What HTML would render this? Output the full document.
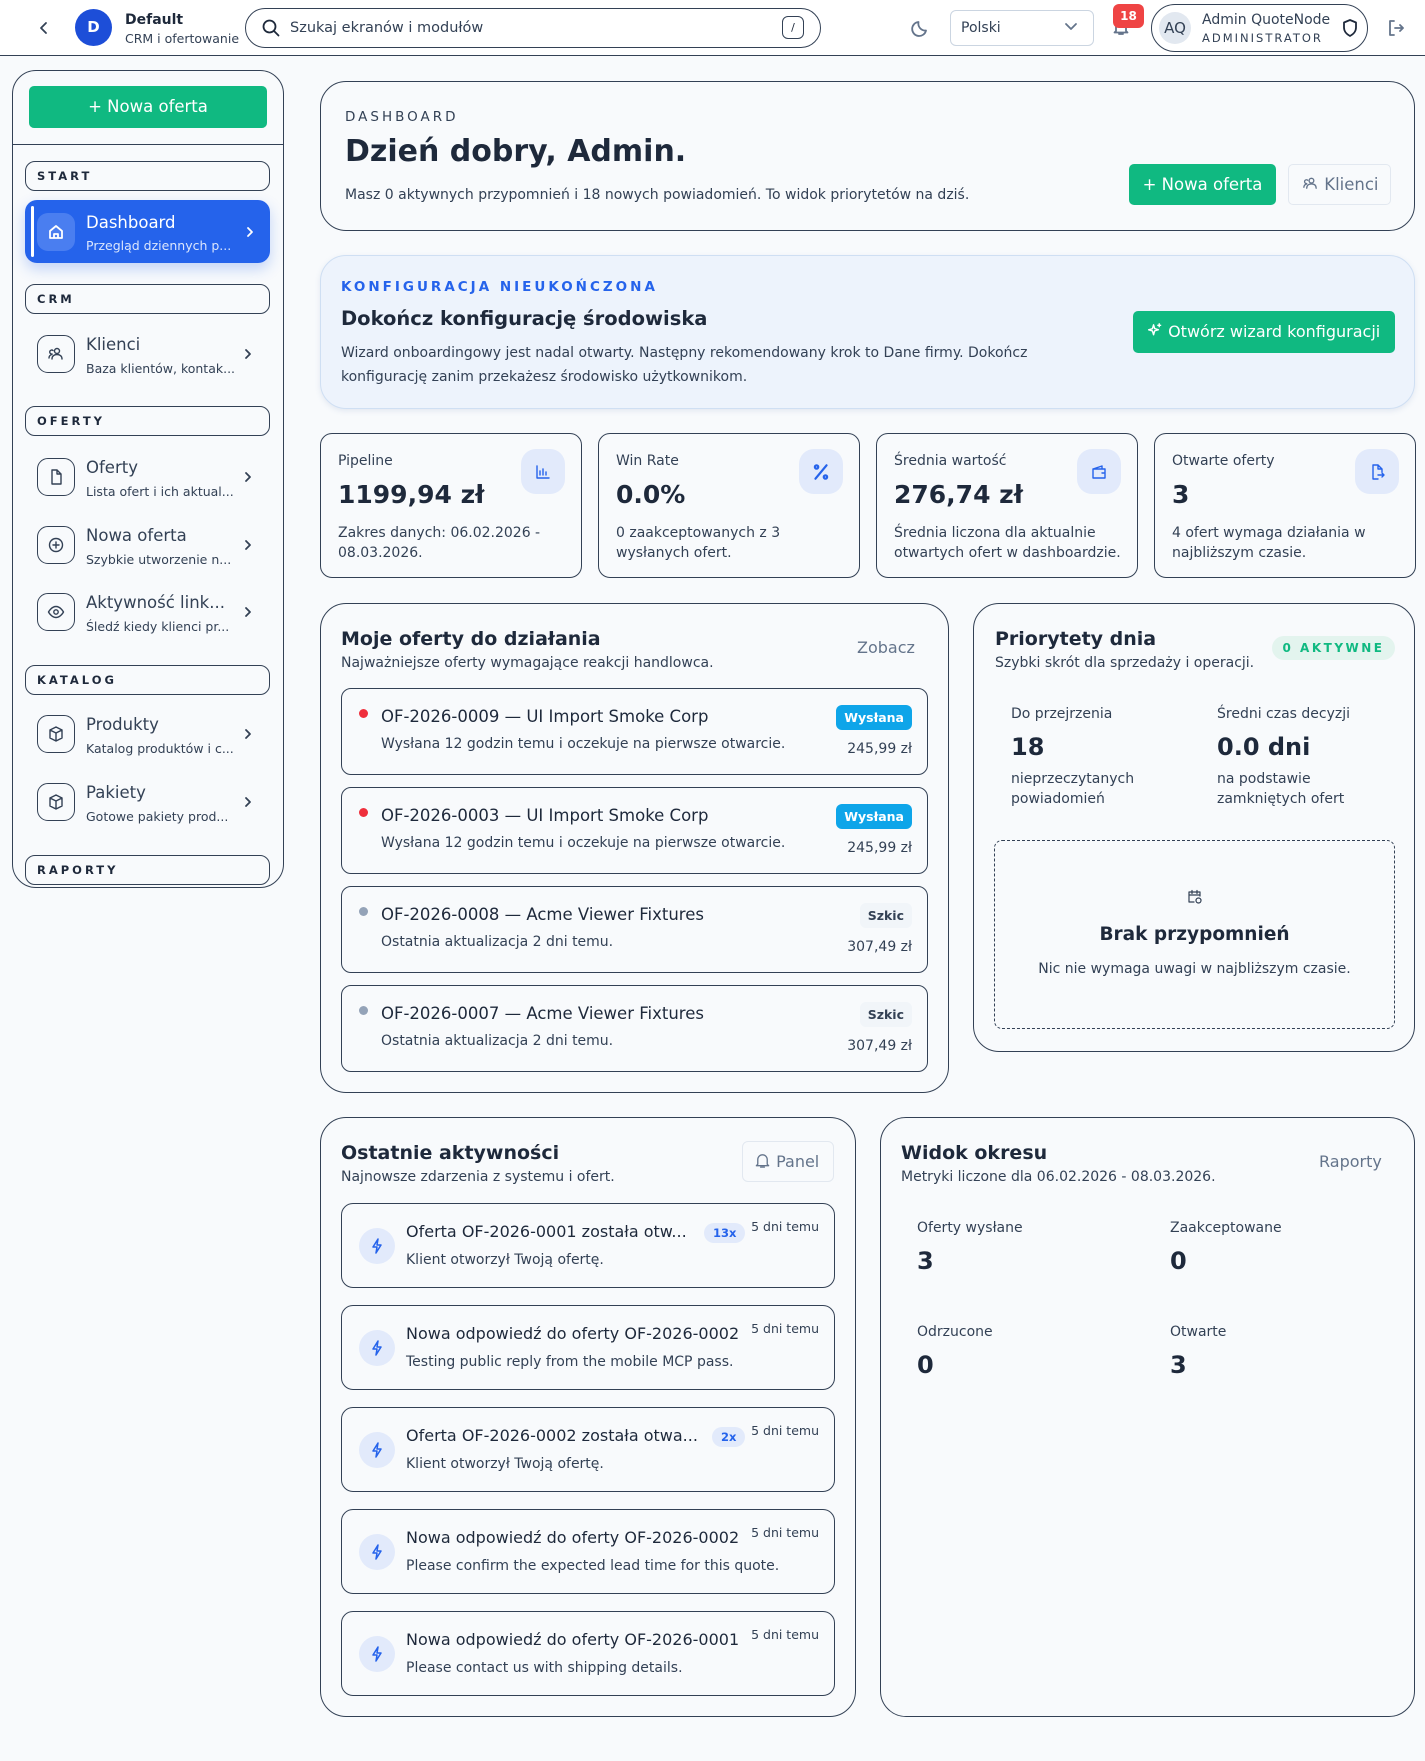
<!DOCTYPE html>
<html><head><meta charset="utf-8">
<style>
*{box-sizing:border-box;margin:0;padding:0}
body{width:1425px;height:1761px;background:#f8fafc;font-family:"DejaVu Sans","Liberation Sans",sans-serif;color:#1e293b;position:relative;overflow:hidden}
.a{position:absolute}
.card{position:absolute;border:1.3px solid #334155;border-radius:26px;background:#f8fafc}
.ico{stroke:currentColor;fill:none;stroke-width:1.8;stroke-linecap:round;stroke-linejoin:round}
.lbl{position:absolute;left:25px;width:245px;height:30px;border:1.3px solid #334155;border-radius:10px;font-size:11.5px;font-weight:bold;letter-spacing:3px;padding:7px 0 0 11px;color:#1e293b}
.item{position:absolute;left:25px;width:245px;height:62px}
.item .ib{position:absolute;left:12px;top:12px;width:38px;height:38px;border:1.3px solid #334155;border-radius:11px;display:flex;align-items:center;justify-content:center;color:#334155}
.item .t{position:absolute;left:61px;top:12px;font-size:16.5px;color:#334155;white-space:nowrap}
.item .s{position:absolute;left:61px;top:38px;font-size:12.5px;color:#334155;white-space:nowrap}
.item .c{position:absolute;left:218px;top:24px;color:#334155}
.stat{position:absolute;top:433px;width:262px;height:145px;border:1.3px solid #334155;border-radius:12px}
.stat .l{position:absolute;left:17px;top:19px;font-size:14px;color:#334155}
.stat .v{position:absolute;left:17px;top:46px;font-size:25px;font-weight:bold;color:#1e293b}
.stat .d{position:absolute;left:17px;top:89px;font-size:14px;line-height:20px;color:#334155;width:230px}
.stat .ic{position:absolute;right:16px;top:15px;width:44px;height:45px;border-radius:15px;background:#e2eafb;display:flex;align-items:center;justify-content:center;color:#2563eb}
.off{position:absolute;left:341px;width:587px;height:87px;border:1.3px solid #334155;border-radius:10px}
.off .dot{position:absolute;left:17px;top:20px;width:9px;height:9px;border-radius:50%}
.off .t{position:absolute;left:39px;top:18px;font-size:16.5px;color:#1e293b}
.off .s{position:absolute;left:39px;top:47px;font-size:14px;color:#334155}
.off .b{position:absolute;right:15px;top:16px;height:25px;padding:0 8px;border-radius:6px;font-size:12.5px;font-weight:bold;line-height:25px}
.off .p{position:absolute;right:15px;top:52px;font-size:14px;color:#334155}
.act{position:absolute;left:341px;width:494px;height:85px;border:1.3px solid #334155;border-radius:12px}
.act .ci{position:absolute;left:17px;top:24px;width:36px;height:36px;border-radius:50%;background:#e2eafb;display:flex;align-items:center;justify-content:center;color:#2563eb}
.act .t{position:absolute;left:64px;top:18px;font-size:16px;color:#1e293b;white-space:nowrap}
.act .s{position:absolute;left:64px;top:48px;font-size:14px;color:#334155;white-space:nowrap}
.act .tm{position:absolute;right:15px;top:15px;font-size:12.5px;color:#334155}
.act .n{position:absolute;top:19px;height:20px;padding:0 9px;border-radius:10px;background:#e2eafb;color:#2563eb;font-size:11.5px;font-weight:bold;line-height:20px}
.h2{position:absolute;font-size:19px;font-weight:bold;color:#1e293b}
.sub{position:absolute;font-size:14px;color:#334155}
.m .l{position:absolute;font-size:14px;color:#334155}
.m .v{position:absolute;font-size:24px;font-weight:bold;color:#1e293b}
</style></head><body>

<!-- HEADER -->
<div class="a" style="left:0;top:0;width:1425px;height:56px;background:#fff;border-bottom:1.3px solid #334155"></div>
<svg class="a ico" style="left:37px;top:20px;color:#334155" width="14" height="16" viewBox="0 0 14 16"><path d="M9 3L4 8l5 5"/></svg>
<div class="a" style="left:75px;top:9px;width:37px;height:37px;border-radius:50%;background:#1d4ed8;color:#fff;font-weight:bold;font-size:15px;text-align:center;line-height:37px">D</div>
<div class="a" style="left:125px;top:12px;font-size:14px;font-weight:bold">Default</div>
<div class="a" style="left:125px;top:31px;font-size:12.5px;color:#334155">CRM i ofertowanie</div>
<div class="a" style="left:245px;top:8px;width:576px;height:40px;border:1.3px solid #334155;border-radius:20px"></div>
<svg class="a ico" style="left:261px;top:18px;color:#1e293b" width="20" height="20" viewBox="0 0 20 20"><circle cx="8.5" cy="8.5" r="6"/><path d="M13 13l4.5 4.5"/></svg>
<div class="a" style="left:290px;top:20px;font-size:14.5px;color:#334155">Szukaj ekranów i modułów</div>
<div class="a" style="left:782px;top:16px;width:22px;height:23px;border:1.3px solid #334155;border-radius:6px;font-size:11px;text-align:center;line-height:21px">/</div>
<svg class="a ico" style="left:911px;top:18px;color:#64748b" width="20" height="20" viewBox="0 0 20 20"><path d="M15 12.5A7 7 0 0 1 7.5 4a7 7 0 1 0 7.5 8.5z"/></svg>
<div class="a" style="left:950px;top:10px;width:144px;height:36px;border:1px solid #cbd5e1;border-radius:6px;background:#fff"></div>
<div class="a" style="left:961px;top:20px;font-size:14px;color:#334155">Polski</div>
<svg class="a ico" style="left:1064px;top:22px;color:#64748b" width="14" height="10" viewBox="0 0 14 10"><path d="M2 2l5 5 5-5"/></svg>
<svg class="a ico" style="left:1112px;top:18px;color:#64748b" width="18" height="18" viewBox="0 0 18 18"><path d="M4 13V8a5 5 0 0 1 10 0v5l1.5 1.5h-13zM7 16h4"/></svg>
<div class="a" style="left:1113px;top:4px;width:31px;height:24px;border-radius:6px;background:#ef4444;color:#fff;font-size:12px;font-weight:bold;text-align:center;line-height:24px">18</div>
<div class="a" style="left:1151px;top:4px;width:217px;height:48px;border:1.3px solid #334155;border-radius:24px"></div>
<div class="a" style="left:1159px;top:12px;width:32px;height:32px;border-radius:50%;background:#e2e8f0;font-size:15px;text-align:center;line-height:32px;color:#334155">AQ</div>
<div class="a" style="left:1202px;top:12px;font-size:14px;color:#334155">Admin QuoteNode</div>
<div class="a" style="left:1202px;top:31px;font-size:11.5px;letter-spacing:2px;color:#334155">ADMINISTRATOR</div>
<svg class="a ico" style="left:1341px;top:18px;color:#1e293b" width="18" height="20" viewBox="0 0 18 20"><path d="M9 2l6 2.5v5c0 4-3 7-6 8.5-3-1.5-6-4.5-6-8.5v-5z"/></svg>
<svg class="a ico" style="left:1386px;top:18px;color:#64748b" width="20" height="20" viewBox="0 0 20 20"><path d="M8 3H4v14h4M9 10h8M14 7l3 3-3 3"/></svg>

<!-- SIDEBAR -->
<div class="card" style="left:12px;top:70px;width:272px;height:818px;border-radius:24px"></div>
<div class="a" style="left:29px;top:86px;width:238px;height:42px;border-radius:5px;background:#10b981;color:#fff;font-size:16.5px;text-align:center;line-height:42px">+ Nowa oferta</div>
<div class="a" style="left:12px;top:144px;width:272px;border-top:1.3px solid #334155"></div>
<div class="lbl" style="top:161px">START</div>
<div class="a" style="left:25px;top:200px;width:245px;height:63px;border-radius:12px;background:#2563eb;box-shadow:0 6px 14px rgba(37,99,235,.25)"></div>
<div class="a" style="left:31px;top:206px;width:3px;height:51px;background:#fff;border-radius:2px"></div>
<div class="a" style="left:37px;top:213px;width:38px;height:38px;border-radius:11px;background:#4a7ef0;display:flex;align-items:center;justify-content:center;color:#fff"><svg class="ico" width="18" height="18" viewBox="0 0 18 18"><path d="M3 8l6-5 6 5v7H3zM7 15v-4h4v4"/></svg></div>
<div class="a" style="left:86px;top:213px;font-size:16.5px;color:#fff">Dashboard</div>
<div class="a" style="left:86px;top:238px;font-size:12.5px;color:#dbe6fd">Przegląd dziennych p...</div>
<svg class="a ico" style="left:245px;top:225px;color:#fff" width="10" height="14" viewBox="0 0 10 14"><path d="M3 3l4 4-4 4"/></svg>

<div class="lbl" style="top:284px">CRM</div>
<div class="item" style="top:323px"><div class="ib"><svg class="ico" width="18" height="18" viewBox="0 0 18 18" style="stroke-width:1.4"><circle cx="10" cy="6" r="2.5"/><path d="M5 14c0-3 2-4.5 5-4.5s5 1.5 5 4.5M6 5.5a2 2 0 1 0-1 3.5M2 13c0-2 1-3 3-3.5"/></svg></div><div class="t">Klienci</div><div class="s">Baza klientów, kontak...</div><svg class="c ico" width="10" height="14" viewBox="0 0 10 14"><path d="M3 3l4 4-4 4"/></svg></div>
<div class="lbl" style="top:406px">OFERTY</div>
<div class="item" style="top:446px"><div class="ib"><svg class="ico" width="18" height="18" viewBox="0 0 18 18" style="stroke-width:1.4"><path d="M5 2h5l4 4v10H5zM10 2v4h4"/></svg></div><div class="t">Oferty</div><div class="s">Lista ofert i ich aktual...</div><svg class="c ico" width="10" height="14" viewBox="0 0 10 14"><path d="M3 3l4 4-4 4"/></svg></div>
<div class="item" style="top:514px"><div class="ib"><svg class="ico" width="18" height="18" viewBox="0 0 18 18" style="stroke-width:1.4"><circle cx="9" cy="9" r="6.5"/><path d="M9 6v6M6 9h6"/></svg></div><div class="t">Nowa oferta</div><div class="s">Szybkie utworzenie n...</div><svg class="c ico" width="10" height="14" viewBox="0 0 10 14"><path d="M3 3l4 4-4 4"/></svg></div>
<div class="item" style="top:581px"><div class="ib"><svg class="ico" width="18" height="18" viewBox="0 0 18 18" style="stroke-width:1.4"><path d="M1.5 9s3-5.5 7.5-5.5S16.5 9 16.5 9s-3 5.5-7.5 5.5S1.5 9 1.5 9z"/><circle cx="9" cy="9" r="2.2"/></svg></div><div class="t">Aktywność link...</div><div class="s">Śledź kiedy klienci pr...</div><svg class="c ico" width="10" height="14" viewBox="0 0 10 14"><path d="M3 3l4 4-4 4"/></svg></div>
<div class="lbl" style="top:665px">KATALOG</div>
<div class="item" style="top:703px"><div class="ib"><svg class="ico" width="18" height="18" viewBox="0 0 18 18" style="stroke-width:1.4"><path d="M9 2l6 3v8l-6 3-6-3V5zM3 5l6 3 6-3M9 8v8"/></svg></div><div class="t">Produkty</div><div class="s">Katalog produktów i c...</div><svg class="c ico" width="10" height="14" viewBox="0 0 10 14"><path d="M3 3l4 4-4 4"/></svg></div>
<div class="item" style="top:771px"><div class="ib"><svg class="ico" width="18" height="18" viewBox="0 0 18 18" style="stroke-width:1.4"><path d="M9 2l6 3v8l-6 3-6-3V5zM3 5l6 3 6-3M9 8v8"/></svg></div><div class="t">Pakiety</div><div class="s">Gotowe pakiety prod...</div><svg class="c ico" width="10" height="14" viewBox="0 0 10 14"><path d="M3 3l4 4-4 4"/></svg></div>
<div class="lbl" style="top:855px">RAPORTY</div>

<!-- HERO -->
<div class="card" style="left:320px;top:81px;width:1095px;height:150px"></div>
<div class="a" style="left:345px;top:109px;font-size:13.5px;letter-spacing:3px;color:#334155">DASHBOARD</div>
<div class="a" style="left:345px;top:134px;font-size:30px;font-weight:bold;color:#1e293b">Dzień dobry, Admin.</div>
<div class="a" style="left:345px;top:187px;font-size:14px;color:#334155">Masz 0 aktywnych przypomnień i 18 nowych powiadomień. To widok priorytetów na dziś.</div>
<div class="a" style="left:1129px;top:164px;width:147px;height:41px;border-radius:5px;background:#10b981;color:#fff;font-size:16.5px;text-align:center;line-height:41px">+ Nowa oferta</div>
<div class="a" style="left:1288px;top:164px;width:103px;height:41px;border-radius:5px;border:1px solid #e2e8f0;color:#64748b;font-size:16.5px;line-height:39px;padding-left:13px"><svg class="ico" width="17" height="17" viewBox="0 0 18 18" style="stroke-width:1.4;vertical-align:-2px"><circle cx="10" cy="6" r="2.5"/><path d="M5 14c0-3 2-4.5 5-4.5s5 1.5 5 4.5M6 5.5a2 2 0 1 0-1 3.5M2 13c0-2 1-3 3-3.5"/></svg> Klienci</div>

<!-- CONFIG -->
<div class="a" style="left:320px;top:255px;width:1095px;height:154px;border-radius:26px;background:#edf3fc;border:1px solid #cfdff3;box-shadow:0 2px 6px rgba(100,130,180,.15)"></div>
<div class="a" style="left:341px;top:279px;font-size:13.5px;font-weight:bold;letter-spacing:3px;color:#2563eb">KONFIGURACJA NIEUKOŃCZONA</div>
<div class="a" style="left:341px;top:307px;font-size:19.5px;font-weight:bold;color:#1e293b">Dokończ konfigurację środowiska</div>
<div class="a" style="left:341px;top:341px;width:720px;font-size:14px;line-height:24px;color:#334155">Wizard onboardingowy jest nadal otwarty. Następny rekomendowany krok to Dane firmy. Dokończ konfigurację zanim przekażesz środowisko użytkownikom.</div>
<div class="a" style="left:1133px;top:311px;width:262px;height:42px;border-radius:5px;background:#10b981;color:#fff;font-size:16px;line-height:42px;padding-left:13px"><svg class="ico" width="17" height="17" viewBox="0 0 18 18" style="stroke-width:1.5;vertical-align:-2px"><path d="M8 3l1.2 4 4 1.2-4 1.2L8 13.5l-1.2-4-4-1.2 4-1.2zM14 2v3M12.5 3.5h3"/></svg> Otwórz wizard konfiguracji</div>

<!-- STATS -->
<div class="stat" style="left:320px"><div class="l">Pipeline</div><div class="v">1199,94 zł</div><div class="d">Zakres danych: 06.02.2026 - 08.03.2026.</div><div class="ic"><svg class="ico" width="18" height="18" viewBox="0 0 18 18" style="stroke-width:1.4"><path d="M3 3v12h12M6 12V8M9 12V6M12 12V9"/></svg></div></div>
<div class="stat" style="left:598px"><div class="l">Win Rate</div><div class="v">0.0%</div><div class="d">0 zaakceptowanych z 3 wysłanych ofert.</div><div class="ic"><svg class="ico" width="20" height="20" viewBox="0 0 18 18" style="stroke-width:2"><path d="M14 3L4 15"/><circle cx="5" cy="4.5" r="1.5"/><circle cx="13" cy="13.5" r="1.5"/></svg></div></div>
<div class="stat" style="left:876px"><div class="l">Średnia wartość</div><div class="v">276,74 zł</div><div class="d">Średnia liczona dla aktualnie otwartych ofert w dashboardzie.</div><div class="ic"><svg class="ico" width="18" height="18" viewBox="0 0 18 18" style="stroke-width:1.4"><path d="M3 6h12v9H3zM3 6l9-3v3M12 10h2"/></svg></div></div>
<div class="stat" style="left:1154px"><div class="l">Otwarte oferty</div><div class="v">3</div><div class="d">4 ofert wymaga działania w najbliższym czasie.</div><div class="ic"><svg class="ico" width="18" height="18" viewBox="0 0 18 18" style="stroke-width:1.4"><path d="M5 2h5l4 4v3M10 2v4h4M5 2v14h5M10 12h6M14 10l2 2-2 2"/></svg></div></div>

<!-- MOJE OFERTY -->
<div class="card" style="left:320px;top:603px;width:629px;height:490px"></div>
<div class="h2" style="left:341px;top:628px">Moje oferty do działania</div>
<div class="sub" style="left:341px;top:655px">Najważniejsze oferty wymagające reakcji handlowca.</div>
<div class="a" style="left:857px;top:638px;font-size:16px;color:#64748b">Zobacz</div>
<div class="off" style="top:688px"><div class="dot" style="background:#ef2f3c"></div><div class="t">OF-2026-0009 — UI Import Smoke Corp</div><div class="s">Wysłana 12 godzin temu i oczekuje na pierwsze otwarcie.</div><div class="b" style="background:#0ea5e9;color:#fff">Wysłana</div><div class="p">245,99 zł</div></div>
<div class="off" style="top:787px"><div class="dot" style="background:#ef2f3c"></div><div class="t">OF-2026-0003 — UI Import Smoke Corp</div><div class="s">Wysłana 12 godzin temu i oczekuje na pierwsze otwarcie.</div><div class="b" style="background:#0ea5e9;color:#fff">Wysłana</div><div class="p">245,99 zł</div></div>
<div class="off" style="top:886px"><div class="dot" style="background:#94a3b8"></div><div class="t">OF-2026-0008 — Acme Viewer Fixtures</div><div class="s">Ostatnia aktualizacja 2 dni temu.</div><div class="b" style="background:#f1f5f9;color:#334155">Szkic</div><div class="p">307,49 zł</div></div>
<div class="off" style="top:985px"><div class="dot" style="background:#94a3b8"></div><div class="t">OF-2026-0007 — Acme Viewer Fixtures</div><div class="s">Ostatnia aktualizacja 2 dni temu.</div><div class="b" style="background:#f1f5f9;color:#334155">Szkic</div><div class="p">307,49 zł</div></div>

<!-- PRIORYTETY -->
<div class="card" style="left:973px;top:603px;width:442px;height:449px"></div>
<div class="h2" style="left:995px;top:628px">Priorytety dnia</div>
<div class="sub" style="left:995px;top:655px">Szybki skrót dla sprzedaży i operacji.</div>
<div class="a" style="left:1272px;top:636px;width:123px;height:24px;border-radius:12px;background:#e3f4ee;color:#10b981;font-size:12px;font-weight:bold;letter-spacing:2.5px;text-align:center;line-height:24px">0 AKTYWNE</div>
<div class="m">
<div class="l" style="left:1011px;top:706px">Do przejrzenia</div><div class="v" style="left:1011px;top:733px">18</div>
<div class="l" style="left:1011px;top:769px;line-height:20px">nieprzeczytanych<br>powiadomień</div>
<div class="l" style="left:1217px;top:706px">Średni czas decyzji</div><div class="v" style="left:1217px;top:733px">0.0 dni</div>
<div class="l" style="left:1217px;top:769px;line-height:20px">na podstawie<br>zamkniętych ofert</div>
</div>
<div class="a" style="left:994px;top:840px;width:401px;height:189px;border:1.3px dashed #334155;border-radius:8px"></div>
<svg class="a ico" style="left:1187px;top:889px;color:#334155;stroke-width:1.2" width="16" height="16" viewBox="0 0 16 16"><path d="M7 13H2V3h11v4M2 6h11M5 1.5v3M10 1.5v3"/><circle cx="11.5" cy="11.5" r="2.5"/></svg>
<div class="a" style="left:994px;top:924px;width:401px;text-align:center;font-size:18.5px;font-weight:bold">Brak przypomnień</div>
<div class="a" style="left:994px;top:961px;width:401px;text-align:center;font-size:14px;color:#334155">Nic nie wymaga uwagi w najbliższym czasie.</div>

<!-- OSTATNIE -->
<div class="card" style="left:320px;top:1117px;width:536px;height:600px"></div>
<div class="h2" style="left:341px;top:1142px">Ostatnie aktywności</div>
<div class="sub" style="left:341px;top:1169px">Najnowsze zdarzenia z systemu i ofert.</div>
<div class="a" style="left:742px;top:1141px;width:92px;height:41px;border:1px solid #e2e8f0;border-radius:6px;color:#64748b;font-size:16px;line-height:39px;padding-left:11px"><svg class="ico" width="17" height="17" viewBox="0 0 18 18" style="stroke-width:1.4;vertical-align:-2px"><path d="M4 13V8a5 5 0 0 1 10 0v5l1.5 1.5h-13zM7 16h4"/></svg> Panel</div>

<div class="act" style="top:1203px"><div class="ci"><svg class="ico" width="14" height="18" viewBox="0 0 14 18" style="stroke-width:1.5"><path d="M8 2L3 10h4l-1 6 5-8H7z"/></svg></div><div class="t">Oferta OF-2026-0001 została otw...</div><div class="n" style="left:362px">13x</div><div class="tm">5 dni temu</div><div class="s">Klient otworzył Twoją ofertę.</div></div>
<div class="act" style="top:1305px"><div class="ci"><svg class="ico" width="14" height="18" viewBox="0 0 14 18" style="stroke-width:1.5"><path d="M8 2L3 10h4l-1 6 5-8H7z"/></svg></div><div class="t">Nowa odpowiedź do oferty OF-2026-0002</div><div class="tm">5 dni temu</div><div class="s">Testing public reply from the mobile MCP pass.</div></div>
<div class="act" style="top:1407px"><div class="ci"><svg class="ico" width="14" height="18" viewBox="0 0 14 18" style="stroke-width:1.5"><path d="M8 2L3 10h4l-1 6 5-8H7z"/></svg></div><div class="t">Oferta OF-2026-0002 została otwa...</div><div class="n" style="left:370px">2x</div><div class="tm">5 dni temu</div><div class="s">Klient otworzył Twoją ofertę.</div></div>
<div class="act" style="top:1509px"><div class="ci"><svg class="ico" width="14" height="18" viewBox="0 0 14 18" style="stroke-width:1.5"><path d="M8 2L3 10h4l-1 6 5-8H7z"/></svg></div><div class="t">Nowa odpowiedź do oferty OF-2026-0002</div><div class="tm">5 dni temu</div><div class="s">Please confirm the expected lead time for this quote.</div></div>
<div class="act" style="top:1611px"><div class="ci"><svg class="ico" width="14" height="18" viewBox="0 0 14 18" style="stroke-width:1.5"><path d="M8 2L3 10h4l-1 6 5-8H7z"/></svg></div><div class="t">Nowa odpowiedź do oferty OF-2026-0001</div><div class="tm">5 dni temu</div><div class="s">Please contact us with shipping details.</div></div>

<!-- WIDOK -->
<div class="card" style="left:880px;top:1117px;width:535px;height:600px"></div>
<div class="h2" style="left:901px;top:1142px">Widok okresu</div>
<div class="sub" style="left:901px;top:1169px">Metryki liczone dla 06.02.2026 - 08.03.2026.</div>
<div class="a" style="left:1319px;top:1152px;font-size:16px;color:#64748b">Raporty</div>
<div class="m">
<div class="l" style="left:917px;top:1220px">Oferty wysłane</div><div class="v" style="left:917px;top:1247px">3</div>
<div class="l" style="left:1170px;top:1220px">Zaakceptowane</div><div class="v" style="left:1170px;top:1247px">0</div>
<div class="l" style="left:917px;top:1324px">Odrzucone</div><div class="v" style="left:917px;top:1351px">0</div>
<div class="l" style="left:1170px;top:1324px">Otwarte</div><div class="v" style="left:1170px;top:1351px">3</div>
</div>
</body></html>
